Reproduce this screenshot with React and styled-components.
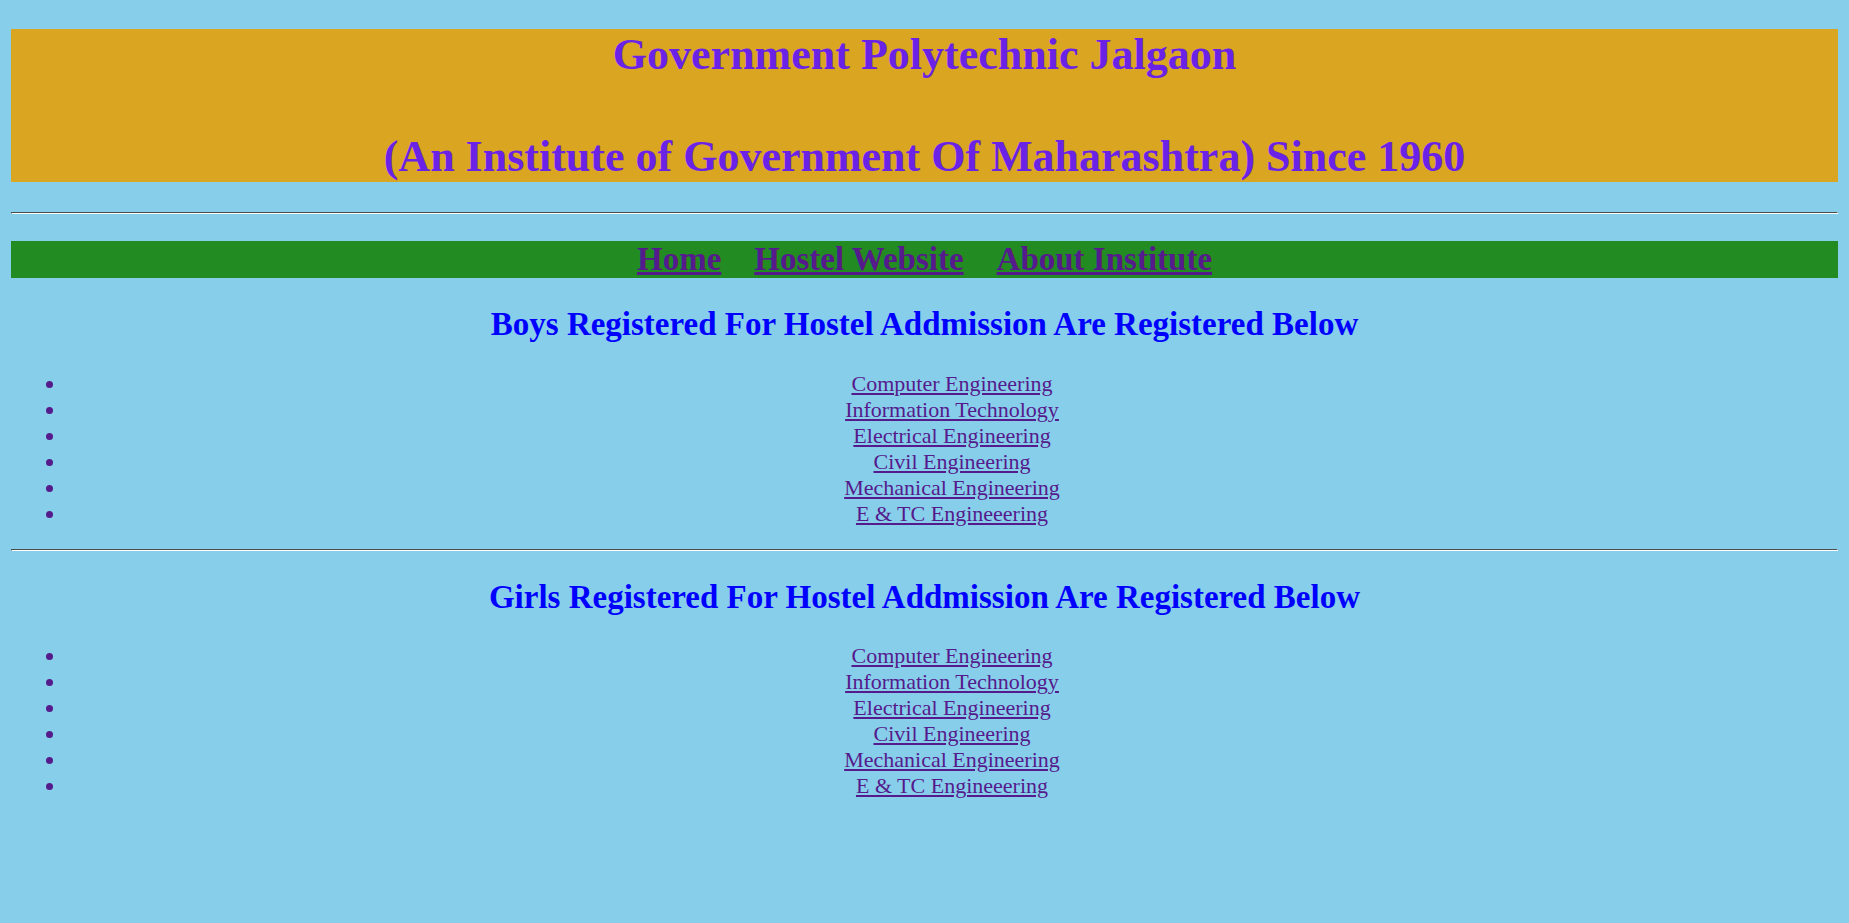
import React from "react";
import styled, { createGlobalStyle } from "styled-components";

const branches = [
  "Computer Engineering",
  "Information Technology",
  "Electrical Engineering",
  "Civil Engineering",
  "Mechanical Engineering",
  "E & TC Engineeering",
];

const navLinks = ["Home", "Hostel Website", "About Institute"];

const App = () => {
  return (
    <>
      <GlobalStyle />
      <Banner>
        Government Polytechnic Jalgaon
        <br />
        <br />
        (An Institute of Government Of Maharashtra) Since 1960
      </Banner>
      <Rule />
      <NavBar>
        {navLinks.map((link) => (
          <NavLink key={link} href="#">
            {link}
          </NavLink>
        ))}
      </NavBar>

      <Section title="Boys Registered For Hostel Addmission Are Registered Below" />
      <Rule />
      <Section title="Girls Registered For Hostel Addmission Are Registered Below" />
    </>
  );
};

const Section = ({ title }) => (
  <>
    <SectionTitle>{title}</SectionTitle>
    <BranchList>
      {branches.map((branch) => (
        <BranchItem key={branch}>
          <BranchLink href="#">{branch}</BranchLink>
        </BranchItem>
      ))}
    </BranchList>
  </>
);

const GlobalStyle = createGlobalStyle`
  html, body {
    background-color: #87ceeb;
  }
  body {
    margin: 0 11px 11px;
    font-family: "Liberation Serif", "Times New Roman", serif;
  }
`;

const Banner = styled.h1`
  background-color: #daa520;
  color: #6a23e6;
  font-size: 44px;
  line-height: 51px;
  font-weight: bold;
  text-align: center;
  margin: 29px 0 29.5px;
`;

const Rule = styled.hr`
  margin: 11px 0;
  border: 1px inset #eee;
  border-top-color: #a0a0a0;
  border-left-color: #a0a0a0;
  border-bottom-color: #fff;
  border-right-color: #fff;
  height: 0;
`;

const NavBar = styled.h2`
  background-color: #228b22;
  font-size: 33px;
  line-height: 37px;
  font-weight: bold;
  text-align: center;
  margin: 27.4px 0;
`;

const NavLink = styled.a`
  color: #551a8b;
  text-decoration: underline;
  margin: 0 16.5px;
`;

const SectionTitle = styled.h2`
  color: #0000ff;
  font-size: 33px;
  line-height: 38px;
  font-weight: bold;
  text-align: center;
  margin: 27.4px 0;
`;

const BranchList = styled.ul`
  margin: 22px 0;
  padding-left: 55px;
  list-style: disc;
`;

const BranchItem = styled.li`
  color: #551a8b;
  font-size: 22px;
  line-height: 26px;
  text-align: center;
`;

const BranchLink = styled.a`
  color: #551a8b;
  text-decoration: underline;
`;

export default App;
